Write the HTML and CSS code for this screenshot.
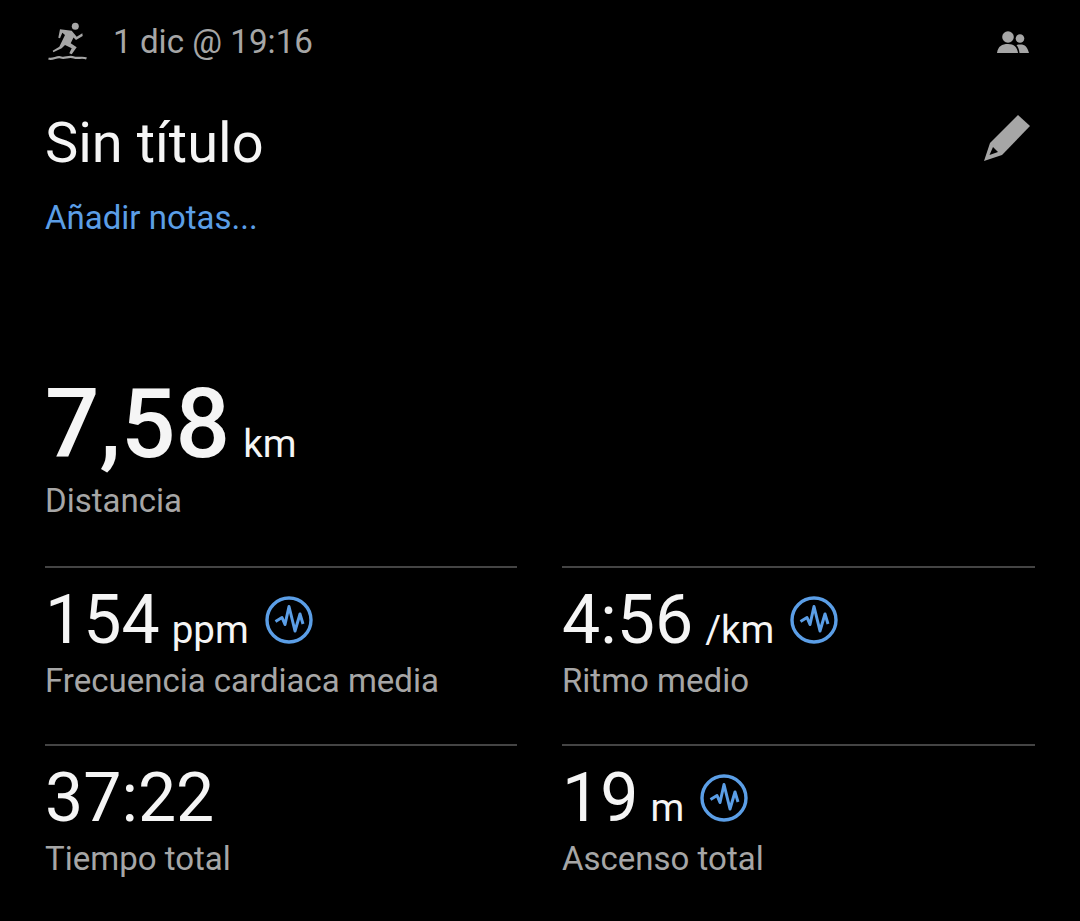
FILE: index.html
```html
<!DOCTYPE html>
<html lang="es">
<head>
    <meta charset="UTF-8">
    <title>Sin título</title>
    <link rel="stylesheet" href="styles.css">
</head>
<body>
    <svg class="defs" width="0" height="0">
        <symbol id="pulse" viewBox="0 0 48 48">
            <circle cx="24" cy="24" r="22" fill="none" stroke="#5b9ee6" stroke-width="3.4"/>
            <path d="M10.500 25.500 L17 21.500 L20 28.500 L24 10.500 L30 35 L35 18 L38 28" fill="none" stroke="#5b9ee6" stroke-width="3" stroke-linejoin="round"/>
        </symbol>
    </svg>
    <div class="container">
        <div class="top-row">
            <svg class="run-icon" viewBox="0 0 40 40">
                <circle cx="27.300" cy="4.300" r="3.500" fill="#a6a6a6"/>
                <path d="M12 7.300 L23.700 8.700 L28.700 14.700 L34.300 11.300 L34.700 14 L28 18 L25.500 15.500 L22.700 21.300 L28.700 25.300 L23.700 32.300 L21.300 31.300 L23.700 26.300 L17 23 L13.700 26.300 L5.300 30.300 L4.700 28.700 L11.300 24.700 L17 13 L14.300 10.700 L12 16.300 L10.300 15.700 Z" fill="#a6a6a6"/>
                <path d="M0.500 36.500 C5 38 9 34 13 35.500 C17 37 21 33.500 26 35.500 C30 37 34 34.500 38.500 36.500" fill="none" stroke="#a6a6a6" stroke-width="2.200"/>
            </svg>
            <span class="date">1 dic @ 19:16</span>
            <svg class="people-icon" viewBox="0 0 32 24">
                <circle cx="11" cy="7" r="5.800" fill="#a6a6a6"/>
                <circle cx="23" cy="8.500" r="4.300" fill="#a6a6a6"/>
                <path d="M0 23 C1 16 5 14 11 14 C17 14 20 17 21 23 Z" fill="#a6a6a6"/>
                <path d="M22.500 23 C22 19 21 17 19.500 15 C21 14.500 22 14.500 23.500 14.500 C28 14.500 30.500 17 32 23 Z" fill="#a6a6a6"/>
            </svg>
        </div>
        <div class="title-row">
            <h1>Sin título</h1>
            <svg class="pencil-icon" viewBox="0 0 46 46">
                <path d="M34 0 L46 11 L18 40 L0 46 L6 28 Z" fill="#a6a6a6"/>
                <path d="M9 32 L14 37 L5.500 40 Z" fill="#000"/>
            </svg>
        </div>
        <a class="notes">Añadir notas...</a>

        <div class="distance">
            <div class="value"><span class="big">7,58</span><span class="unit unit-big">km</span></div>
            <div class="label">Distancia</div>
        </div>

        <div class="stats">
            <div class="stat">
                <div class="value"><span class="num">154</span><span class="unit">ppm</span><svg class="pulse"><use href="#pulse"/></svg></div>
                <div class="label">Frecuencia cardiaca media</div>
            </div>
            <div class="stat">
                <div class="value"><span class="num">4:56</span><span class="unit">/km</span><svg class="pulse"><use href="#pulse"/></svg></div>
                <div class="label">Ritmo medio</div>
            </div>
            <div class="stat">
                <div class="value"><span class="num">37:22</span></div>
                <div class="label">Tiempo total</div>
            </div>
            <div class="stat">
                <div class="value"><span class="num">19</span><span class="unit">m</span><svg class="pulse"><use href="#pulse"/></svg></div>
                <div class="label">Ascenso total</div>
            </div>
        </div>
    </div>
</body>
</html>
```

FILE: styles.css
```css
html, body {
    margin: 0;
    padding: 0;
    background-color: #000;
}
body {
    font-family: Roboto, sans-serif;
    color: #f5f5f5;
}
.defs {
    position: absolute;
}
.container {
    height: 921px;
    box-sizing: border-box;
    padding: 0 45px;
    overflow: hidden;
}
.top-row {
    display: flex;
    align-items: center;
    height: 84px;
}
.run-icon {
    width: 40px;
    height: 40px;
    margin-left: 3px;
}
.date {
    margin-left: 25px;
    margin-top: -2px;
    font-size: 33.200px;
    color: #a6a6a6;
}
.people-icon {
    width: 32px;
    height: 24px;
    margin-left: auto;
    margin-right: 6px;
}
.title-row {
    display: flex;
    align-items: center;
    justify-content: space-between;
    height: 64px;
    margin-top: 27px;
}
h1 {
    margin: 0;
    font-size: 56px;
    font-weight: 400;
}
.pencil-icon {
    width: 46px;
    height: 46px;
    margin-right: 5px;
    margin-bottom: 10px;
}
.notes {
    display: block;
    margin-top: 21px;
    font-size: 33px;
    line-height: 44px;
    color: #5b9ee6;
}
.distance {
    margin-top: 128px;
}
.value {
    display: flex;
    align-items: baseline;
    white-space: pre;
}
.big {
    font-size: 96px;
    font-weight: 500;
    line-height: 112px;
}
.num {
    font-size: 68px;
    line-height: 80px;
}
.unit {
    margin-left: 12px;
    font-size: 38.500px;
}
.unit-big {
    margin-left: 13px;
}
.label {
    margin-top: 1px;
    font-size: 33px;
    line-height: 40px;
    color: #a6a6a6;
}
.stats {
    display: grid;
    grid-template-columns: 472px 473px;
    column-gap: 45px;
    margin-top: 45px;
}
.stat {
    height: 178px;
    box-sizing: border-box;
    border-top: 2px solid #444;
    padding-top: 12px;
}
.pulse {
    width: 48px;
    height: 48px;
    margin-left: 16px;
    align-self: center;
}
```
